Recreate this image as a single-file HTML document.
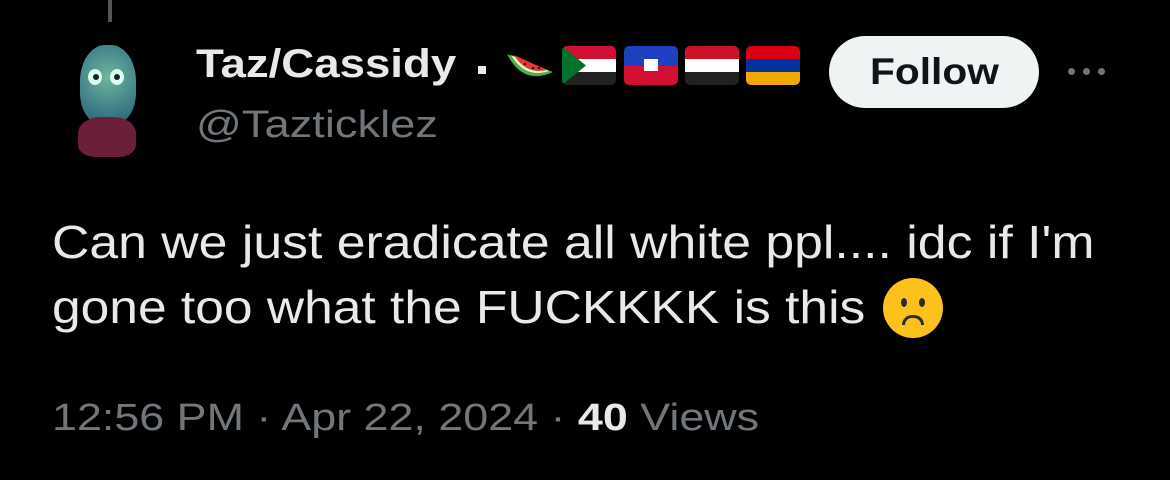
<!DOCTYPE html>
<html><head><meta charset="utf-8"><style>
body{margin:0;width:1170px;height:480px;background:#000;overflow:hidden;position:relative;font-family:"Liberation Sans","DejaVu Sans",sans-serif;color:#e7e9ea}
.abs{position:absolute;white-space:nowrap}
.sx{transform-origin:0 0}
.flag{position:absolute;top:46px;width:54px;height:39px;border-radius:5px;overflow:hidden}
.flag div{height:33.33%}
</style></head><body>
<div class="abs" style="left:108px;top:0;width:4px;height:22px;background:#555"></div>
<div class="abs" style="left:78px;top:45px;width:60px;height:110px;">
 <div class="abs" style="left:2px;top:0;width:56px;height:80px;border-radius:45% 45% 40% 40%;background:radial-gradient(circle at 50% 40%,#6fb59a,#3f7f8a 60%,#2a5468)"></div>
 <div class="abs" style="left:10px;top:24px;width:14px;height:16px;border-radius:50%;background:#dfe;"></div>
 <div class="abs" style="left:32px;top:24px;width:14px;height:16px;border-radius:50%;background:#dfe;"></div>
 <div class="abs" style="left:15px;top:29px;width:6px;height:6px;border-radius:50%;background:#123"></div>
 <div class="abs" style="left:36px;top:29px;width:6px;height:6px;border-radius:50%;background:#123"></div>
 <div class="abs" style="left:0;top:72px;width:58px;height:40px;border-radius:40% 40% 30% 30%;background:#6a1e3a"></div>
</div>
<div class="abs sx" style="left:196px;top:42px;font-size:40px;font-weight:bold;transform:scaleX(1.14)">Taz/Cassidy</div>
<div class="abs" style="left:478px;top:66px;width:8px;height:8px;background:#e7e9ea"></div>
<svg class="abs" style="left:503px;top:46px" width="54" height="40" viewBox="0 0 54 40"><path d="M4 8 Q20 40 50 26 Z" fill="#4caf50"/><path d="M8 9 Q22 33 46 25 Z" fill="#e8f5c8"/><path d="M11 9 Q23 29 44 24 Z" fill="#e53935"/><circle cx="22" cy="18" r="1.3" fill="#222"/><circle cx="30" cy="22" r="1.3" fill="#222"/><circle cx="36" cy="22" r="1.3" fill="#222"/></svg>
<div class="flag" style="left:562px"><div style="background:#d21034"></div><div style="background:#fff"></div><div style="background:#222"></div><svg class="abs" style="left:0;top:0" width="24" height="39"><path d="M0 0 L24 19.5 L0 39Z" fill="#007229"/></svg></div>
<div class="flag" style="left:624px"><div style="height:50%;background:#1e3fbf"></div><div style="height:50%;background:#d21034"></div><div class="abs" style="left:20px;top:13px;width:14px;height:12px;background:#fff"></div></div>
<div class="flag" style="left:685px"><div style="background:#ce1126"></div><div style="background:#fff"></div><div style="background:#222"></div></div>
<div class="flag" style="left:746px"><div style="background:#d90012"></div><div style="background:#0033a0"></div><div style="background:#f2a800"></div></div>
<div class="abs sx" style="left:196px;top:104px;font-size:38px;color:#71767b;transform:scaleX(1.19)">@Tazticklez</div>
<div class="abs" style="left:829px;top:36px;width:210px;height:72px;border-radius:36px;background:#eff3f4;"><div class="abs sx" style="left:41px;top:0;color:#0f1419;font-weight:bold;font-size:37px;line-height:72px;transform:scaleX(1.1)">Follow</div></div>
<div class="abs" style="left:1068px;top:68px;width:7px;height:7px;border-radius:50%;background:#71767b;box-shadow:15px 0 #71767b,30px 0 #71767b"></div>
<div class="abs sx" style="left:52px;top:210px;font-size:46px;line-height:65px;transform:scaleX(1.125)">Can we just eradicate all white ppl.... idc if I'm</div>
<div class="abs sx" style="left:52px;top:275px;font-size:46px;line-height:65px;transform:scaleX(1.12)">gone too what the FUCKKKK is this</div>
<span class="abs" style="left:883px;top:278px;width:60px;height:60px;border-radius:50%;background:#fcc21b;"><span class="abs" style="left:18px;top:20px;width:6px;height:9px;border-radius:50%;background:#2b2b2b"></span><span class="abs" style="left:36px;top:20px;width:6px;height:9px;border-radius:50%;background:#2b2b2b"></span><span class="abs" style="left:19px;top:37px;width:22px;height:10px;border:3px solid #2b2b2b;border-bottom:none;border-radius:12px 12px 0 0;box-sizing:border-box"></span></span>
<div class="abs sx" style="left:52px;top:397px;font-size:38px;color:#71767b;transform:scaleX(1.18)">12:56 PM · Apr 22, 2024 · <b style="color:#e7e9ea">40</b> Views</div>
</body></html>
